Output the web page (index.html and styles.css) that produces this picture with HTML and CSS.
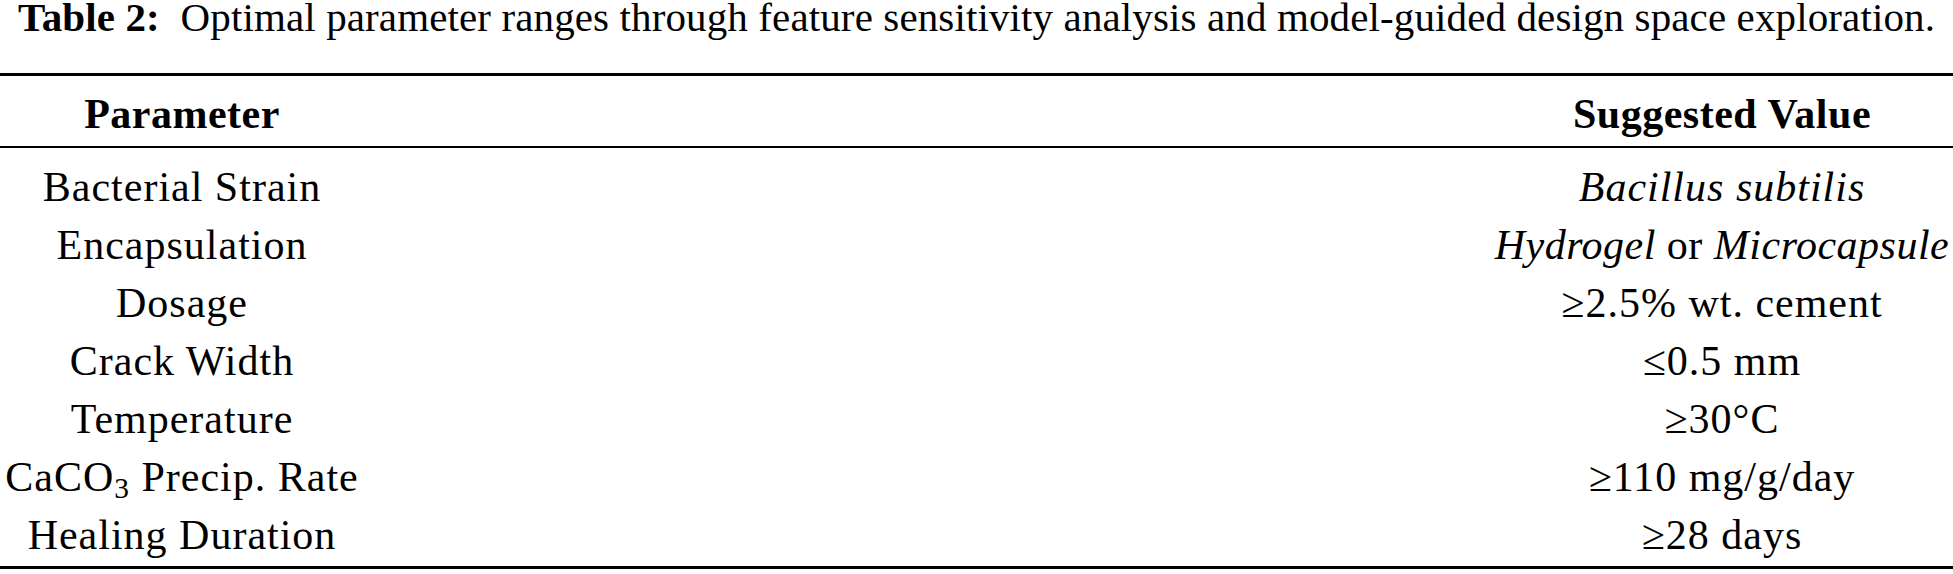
FILE: index.html
```html
<!DOCTYPE html>
<html lang="en">
<head>
<meta charset="utf-8">
<title>Table 2</title>
<link rel="stylesheet" href="styles.css">
</head>
<body>
<div class="page">
  <p class="caption"><b>Table 2:</b>&nbsp; Optimal parameter ranges through feature sensitivity analysis and model-guided design space exploration.</p>
  <div class="table">
    <div class="row head">
      <div class="cell c1">Parameter</div>
      <div class="cell gap"></div>
      <div class="cell c2">Suggested Value</div>
    </div>
    <div class="body">
      <div class="row">
        <div class="cell c1">Bacterial Strain</div>
        <div class="cell gap"></div>
        <div class="cell c2"><i>Bacillus subtilis</i></div>
      </div>
      <div class="row">
        <div class="cell c1">Encapsulation</div>
        <div class="cell gap"></div>
        <div class="cell c2 tight"><i>Hydrogel</i> or <i>Microcapsule</i></div>
      </div>
      <div class="row">
        <div class="cell c1">Dosage</div>
        <div class="cell gap"></div>
        <div class="cell c2">≥2.5% wt. cement</div>
      </div>
      <div class="row">
        <div class="cell c1">Crack Width</div>
        <div class="cell gap"></div>
        <div class="cell c2">≤0.5 mm</div>
      </div>
      <div class="row">
        <div class="cell c1">Temperature</div>
        <div class="cell gap"></div>
        <div class="cell c2">≥30°C</div>
      </div>
      <div class="row">
        <div class="cell c1">CaCO<sub class="sub">3</sub> Precip. Rate</div>
        <div class="cell gap"></div>
        <div class="cell c2">≥110 mg/g/day</div>
      </div>
      <div class="row">
        <div class="cell c1">Healing Duration</div>
        <div class="cell gap"></div>
        <div class="cell c2">≥28 days</div>
      </div>
    </div>
  </div>
</div>
</body>
</html>
```

FILE: styles.css
```css
html, body {
  margin: 0;
  padding: 0;
  background: #ffffff;
}

body {
  font-family: "Liberation Serif", "Times New Roman", serif;
  color: #000000;
  width: 1953px;
}

.page {
  display: flex;
  flex-direction: column;
}

.caption {
  margin: 0 0 39px 0;
  font-size: 41px;
  line-height: 34px;
  text-align: center;
  white-space: nowrap;
  letter-spacing: 0.12px;
}

.table {
  display: flex;
  flex-direction: column;
  border-top: 3px solid #000;
  border-bottom: 3px solid #000;
}

.row {
  display: grid;
  grid-template-columns: 364px 1fr 462px;
  font-size: 42px;
  line-height: 58px;
  letter-spacing: 1px;
}

.head {
  font-weight: bold;
  letter-spacing: 0.5px;
  padding: 9px 0 3px 0;
  border-bottom: 2px solid #000;
}

.body {
  display: flex;
  flex-direction: column;
  padding: 10px 0 2px 0;
}

.cell {
  text-align: center;
  white-space: nowrap;
}

.tight {
  letter-spacing: 0.5px;
}

.sub {
  font-size: 0.7em;
  line-height: 0;
  vertical-align: -0.25em;
}
```
